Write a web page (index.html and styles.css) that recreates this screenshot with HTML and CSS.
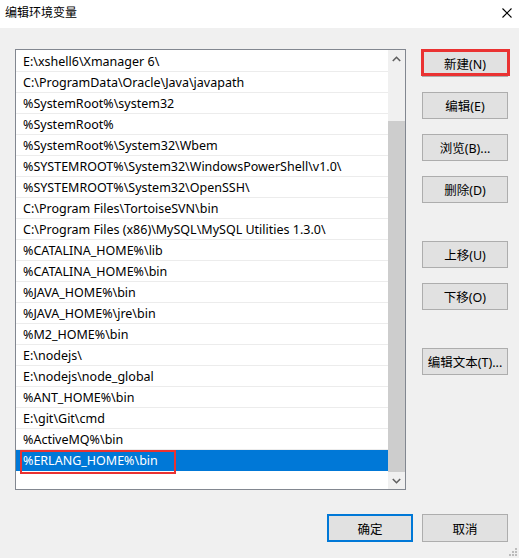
FILE: index.html
```html
<!DOCTYPE html>
<html lang="zh-CN">
<head>
<meta charset="utf-8">
<title>编辑环境变量</title>
<link rel="stylesheet" href="styles.css">
</head>
<body>
<div class="window">
  <div class="titlebar">
    <span class="title">编辑环境变量</span>
    <svg class="close" width="10" height="10" viewBox="0 0 10 10"><path d="M0.5 0.5 L9.5 9.5 M9.5 0.5 L0.5 9.5" stroke="#000" stroke-width="1.1" fill="none"/></svg>
  </div>
  <div class="body">
    <div class="main">
      <div class="listbox">
        <ul class="rows">
          <li>E:\xshell6\Xmanager 6\</li>
          <li>C:\ProgramData\Oracle\Java\javapath</li>
          <li>%SystemRoot%\system32</li>
          <li>%SystemRoot%</li>
          <li>%SystemRoot%\System32\Wbem</li>
          <li>%SYSTEMROOT%\System32\WindowsPowerShell\v1.0\</li>
          <li>%SYSTEMROOT%\System32\OpenSSH\</li>
          <li>C:\Program Files\TortoiseSVN\bin</li>
          <li>C:\Program Files (x86)\MySQL\MySQL Utilities 1.3.0\</li>
          <li>%CATALINA_HOME%\lib</li>
          <li>%CATALINA_HOME%\bin</li>
          <li>%JAVA_HOME%\bin</li>
          <li>%JAVA_HOME%\jre\bin</li>
          <li>%M2_HOME%\bin</li>
          <li>E:\nodejs\</li>
          <li>E:\nodejs\node_global</li>
          <li>%ANT_HOME%\bin</li>
          <li>E:\git\Git\cmd</li>
          <li>%ActiveMQ%\bin</li>
          <li class="selected">%ERLANG_HOME%\bin<span class="mark"></span></li>
        </ul>
        <div class="scrollbar">
          <div class="arrow"><svg width="9" height="6" viewBox="0 0 9 6"><path d="M0.8 5 L4.5 1.3 L8.2 5" stroke="#606060" stroke-width="1.6" fill="none"/></svg></div>
          <div class="track"><div class="thumb"></div></div>
          <div class="arrow"><svg width="9" height="6" viewBox="0 0 9 6"><path d="M0.8 1 L4.5 4.7 L8.2 1" stroke="#606060" stroke-width="1.6" fill="none"/></svg></div>
        </div>
      </div>
      <div class="side">
        <div class="btn-wrap"><button class="btn">新建(N)</button><span class="mark-btn"></span></div>
        <button class="btn gap-sm">编辑(E)</button>
        <button class="btn gap-sm">浏览(B)...</button>
        <button class="btn gap-sm">删除(D)</button>
        <button class="btn gap-lg">上移(U)</button>
        <button class="btn gap-sm">下移(O)</button>
        <button class="btn gap-lg">编辑文本(T)...</button>
      </div>
    </div>
    <div class="footer">
      <button class="btn big default">确定</button>
      <button class="btn big">取消</button>
    </div>
  </div>
  <svg class="grip" width="9" height="9" viewBox="0 0 9 9" fill="#bcbcbc">
    <rect x="6" y="0" width="2" height="2"/>
    <rect x="3" y="3" width="2" height="2"/><rect x="6" y="3" width="2" height="2"/>
    <rect x="0" y="6" width="2" height="2"/><rect x="3" y="6" width="2" height="2"/><rect x="6" y="6" width="2" height="2"/>
  </svg>
</div>
</body>
</html>
```

FILE: styles.css
```css
* { box-sizing: border-box; }
html, body { margin: 0; padding: 0; }
body {
  background: #f0f0f0;
  font-family: "Noto Sans", "Noto Sans CJK SC", sans-serif;
  font-size: 12px;
  color: #000;
}
.window {
  position: relative;
  width: 519px;
  height: 558px;
  overflow: hidden;
}
.titlebar {
  height: 28px;
  background: #fff;
  display: flex;
  align-items: center;
  justify-content: space-between;
  padding: 0 7px 2px 5px;
}
.title { font-size: 12px; line-height: 16px; }
.close { display: block; }
.body { padding: 21px 11px 0 15px; }
.main { display: flex; gap: 16px; }
.listbox {
  width: 391px;
  height: 441px;
  border: 1px solid #828790;
  background: #fff;
  display: flex;
}
.rows {
  list-style: none;
  margin: 0;
  padding: 1px 0 0 0;
  flex: 1;
}
.rows li {
  position: relative;
  height: 21px;
  line-height: 21px;
  padding-left: 7px;
  border-bottom: 1px solid #ececec;
  white-space: nowrap;
  font-size: 12.5px;
}
.rows li.selected {
  background: #0078d7;
  color: #fff;
  border-bottom-color: #0078d7;
}
.mark {
  position: absolute;
  left: 4px;
  top: 0;
  width: 156px;
  height: 24px;
  border: 2px solid #ea3232;
}
.scrollbar {
  width: 17px;
  background: #f0f0f0;
  display: flex;
  flex-direction: column;
}
.arrow {
  height: 17px;
  display: flex;
  align-items: center;
  justify-content: center;
}
.arrow svg { display: block; }
.track {
  flex: 1;
  display: flex;
  flex-direction: column;
  justify-content: flex-end;
}
.thumb {
  height: 351px;
  background: #cdcdcd;
}
.side {
  width: 86px;
  padding-top: 1px;
  display: flex;
  flex-direction: column;
}
.btn {
  display: block;
  width: 86px;
  height: 27px;
  margin: 0;
  padding: 0;
  background: #e1e1e1;
  border: 1px solid #adadad;
  font-family: "Noto Sans", "Noto Sans CJK SC", sans-serif;
  font-size: 12.5px;
  color: #000;
}
.btn-wrap { position: relative; }
.mark-btn {
  position: absolute;
  left: -1px;
  top: -1px;
  width: 89px;
  height: 27px;
  border: 3px solid #ea3232;
}
.gap-sm { margin-top: 15px; }
.gap-lg { margin-top: 38px; }
.footer {
  display: flex;
  justify-content: flex-end;
  gap: 9px;
  margin-top: 24px;
}
.btn.big { height: 28px; }
.btn.default { border: 2px solid #0078d7; }
.grip {
  position: absolute;
  right: 1px;
  bottom: 1px;
}
```
